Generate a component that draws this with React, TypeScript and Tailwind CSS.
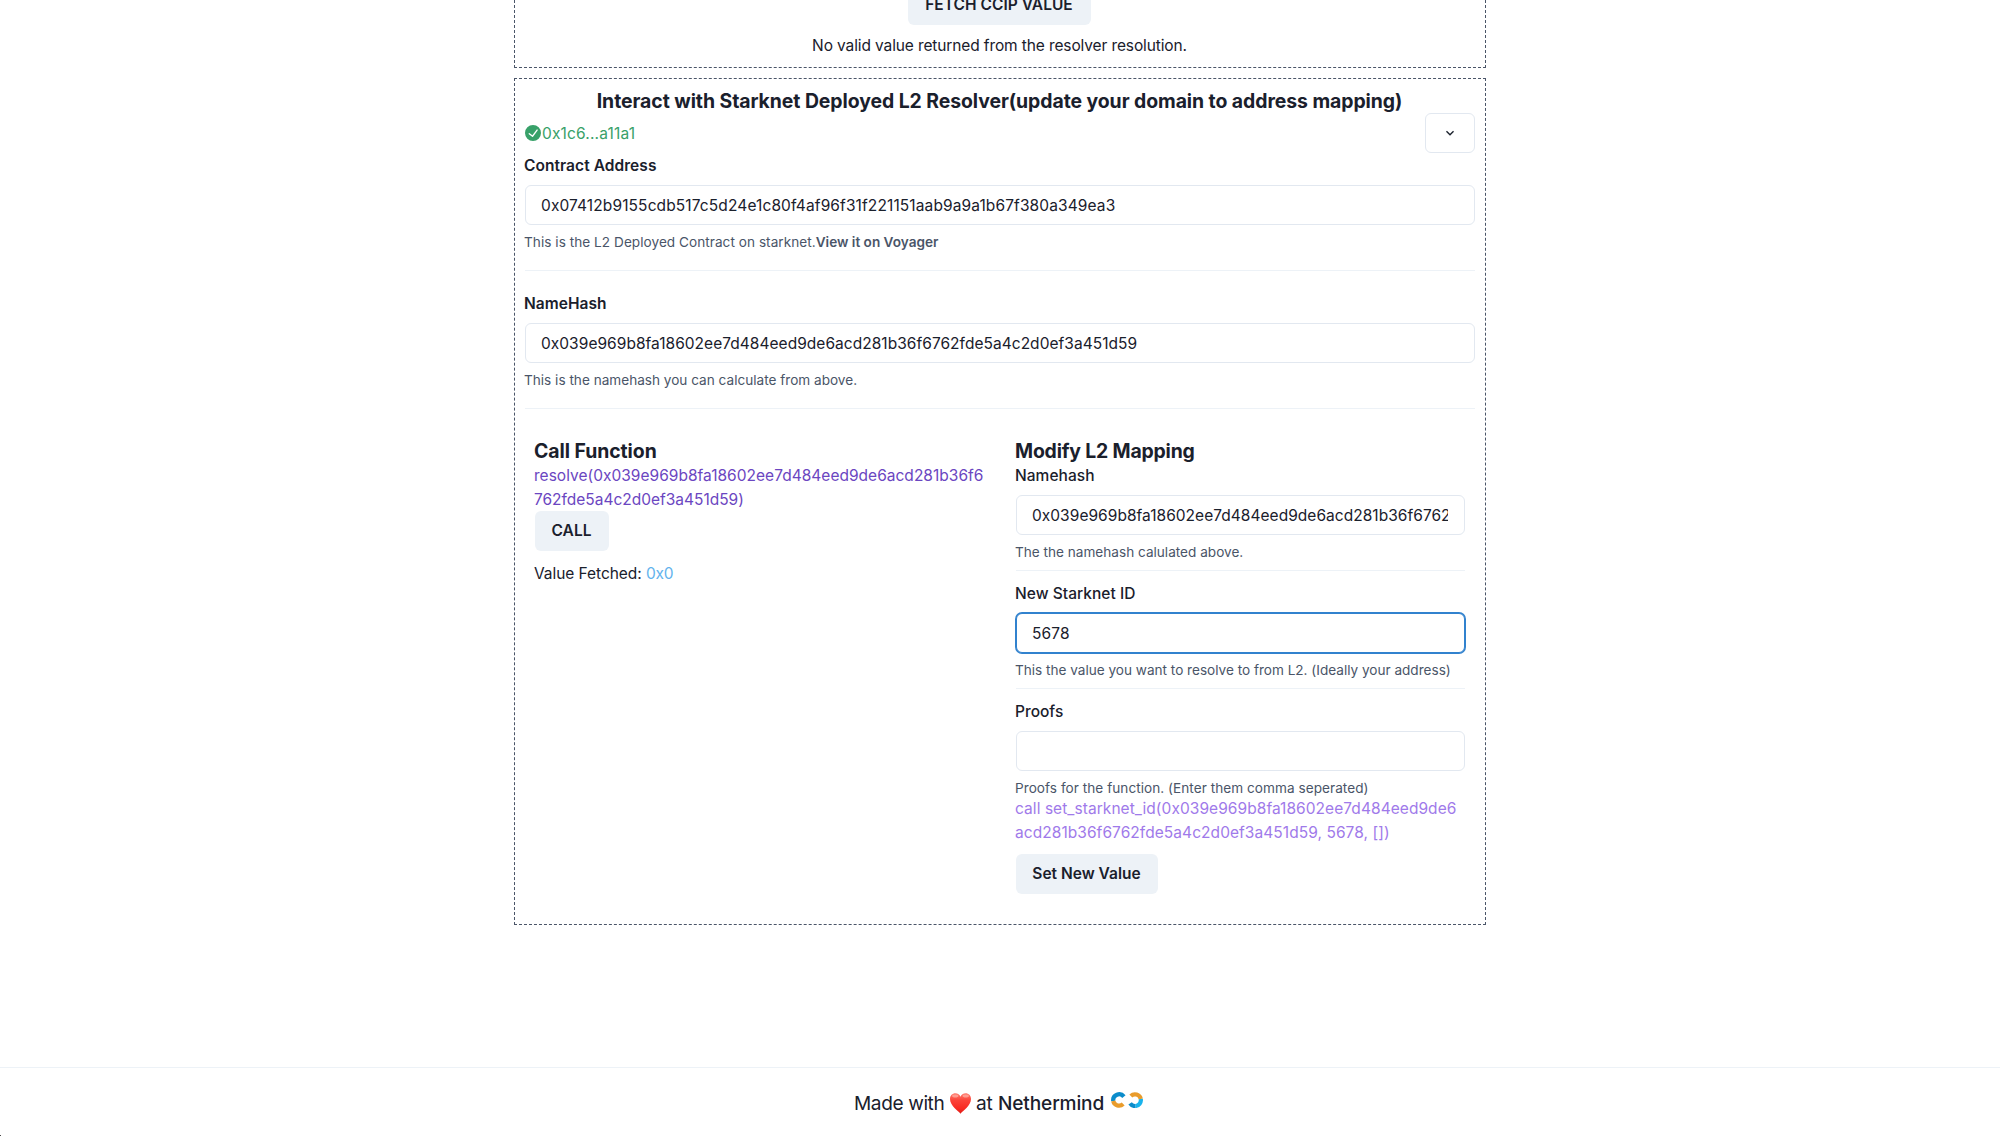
import type { ReactNode } from "react";

const HASH = "0x039e969b8fa18602ee7d484eed9de6acd281b36f6762fde5a4c2d0ef3a451d59";
const CONTRACT = "0x07412b9155cdb517c5d24e1c80f4af96f31f221151aab9a9a1b67f380a349ea3";

function Field({
  label,
  labelClass,
  value,
  inputClass = "border border-[#e2e8f0]",
  children,
}: {
  label: string;
  labelClass: string;
  value: string;
  inputClass?: string;
  children: ReactNode;
}) {
  return (
    <div>
      <label className={`mb-2 -ml-px block h-6 leading-[26px] ${labelClass}`}>{label}</label>
      <input
        readOnly
        value={value}
        className={`block h-10 w-full rounded-md bg-white pl-[15px] pr-4 outline-none ${inputClass}`}
      />
      <div className="mt-2 -ml-px h-[17px] whitespace-nowrap text-[13.6px] leading-[19px] text-[#4a5568]">
        {children}
      </div>
    </div>
  );
}

function Button({ children, className = "" }: { children: ReactNode; className?: string }) {
  return (
    <button
      className={`flex h-10 shrink-0 items-center justify-center whitespace-nowrap rounded-md bg-[#edf2f7] pr-px font-semibold ${className}`}
    >
      {children}
    </button>
  );
}

function CheckCircle() {
  return (
    <svg viewBox="0 0 24 24" className="size-4 shrink-0" fill="currentColor">
      <path d="M12,0A12,12,0,1,0,24,12,12.014,12.014,0,0,0,12,0Zm6.927,8.2-6.845,9.289a1.011,1.011,0,0,1-1.43.188L5.764,13.769a1,1,0,1,1,1.25-1.562l4.076,3.261,6.227-8.451A1,1,0,1,1,18.927,8.2Z" />
    </svg>
  );
}

function Heart() {
  return (
    <svg viewBox="0 0 20 20" className="h-[21px] w-[21px] shrink-0">
      <defs>
        <linearGradient id="heart" x1="0" y1="0" x2="0" y2="1">
          <stop offset="0" stopColor="#ff7a6c" />
          <stop offset="0.35" stopColor="#fb4339" />
          <stop offset="0.75" stopColor="#f82a22" />
          <stop offset="1" stopColor="#dc1d18" />
        </linearGradient>
      </defs>
      <path
        d="M10 19.8C8.2 16.9 0 12.4 0 5.7C0 2.5 2.3 0.3 5.1 0.3C7.4 0.3 9.2 1.6 10 3.5C10.8 1.6 12.6 0.3 14.9 0.3C17.7 0.3 20 2.5 20 5.7C20 12.4 11.8 16.9 10 19.8Z"
        fill="url(#heart)"
      />
      <ellipse cx="5" cy="2.8" rx="3" ry="1.4" fill="#ffb3a8" opacity="0.7" />
      <ellipse cx="15" cy="2.8" rx="3" ry="1.4" fill="#ffb3a8" opacity="0.7" />
    </svg>
  );
}

function NethermindLogo() {
  return (
    <svg viewBox="0 0 32 16" className="h-4 w-8 shrink-0" fill="none" strokeWidth="4.2">
      <path d="M2.2 9A6 6 0 0 1 12.9 4.6" stroke="#0b8ccb" />
      <path d="M2.2 9A6 6 0 0 0 12.2 12" stroke="#e99c2c" />
      <path d="M19.8 4A6 6 0 0 1 29.8 7" stroke="#e99c2c" />
      <path d="M29.8 7A6 6 0 0 1 24.5 14" stroke="#19b3ec" />
      <path d="M24.5 14A6 6 0 0 1 19.1 11.4" stroke="#0b8ccb" />
    </svg>
  );
}

export default function App() {
  return (
    <div className="relative flex h-[1136px] w-full flex-col overflow-hidden bg-white font-[Inter,'Liberation_Sans',sans-serif] text-[15.5px] leading-6 text-[#1a202c]">
      <main className="mx-auto flex w-[972px] flex-1 flex-col gap-[10px]">
        <section className="flex h-[68px] flex-col items-center justify-end border border-t-0 border-dashed border-[#4a5568] pb-[10px]">
          <Button className="mr-px w-[183px] tracking-[0.03px]">FETCH CCIP VALUE</Button>
          <p className="mt-2 mr-px h-6 leading-[26px] tracking-[-0.12px]">
            No valid value returned from the resolver resolution.
          </p>
        </section>

        <section className="flex h-[847px] flex-col border border-dashed border-[#4a5568] p-[10px]">
          <h2 className="h-6 pr-px text-center text-[19.4px] font-bold tracking-[-0.055px]">
            Interact with Starknet Deployed L2 Resolver(update your domain to address mapping)
          </h2>
          <div className="flex h-10 items-center justify-between">
            <div className="flex items-center text-[#38a169]">
              <CheckCircle />
              <span className="ml-px h-6 leading-[26px] tracking-[0.17px]">0x1c6...a11a1</span>
            </div>
            <button className="flex h-10 w-[50px] items-center justify-center rounded-md border border-[#e2e8f0]">
              <svg viewBox="0 0 24 24" className="size-4" fill="currentColor">
                <path d="M16.59 8.59L12 13.17 7.41 8.59 6 10l6 6 6-6z" />
              </svg>
            </button>
          </div>

          <Field
            label="Contract Address"
            labelClass="font-semibold tracking-[0.06px]"
            value={CONTRACT}
            inputClass="border border-[#e2e8f0] tracking-[0.11px]"
          >
            <span className="tracking-[0.04px]">This is the L2 Deployed Contract on starknet.</span>
            <span className="font-semibold">View it on Voyager</span>
          </Field>
          <hr className="my-5 border-[#edf2f7]" />
          <Field
            label="NameHash"
            labelClass="font-semibold tracking-[0.04px]"
            value={HASH}
            inputClass="border border-[#e2e8f0] tracking-[0.035px]"
          >
            This is the namehash you can calculate from above.
          </Field>
          <hr className="my-5 border-[#edf2f7]" />

          <div className="grid grid-cols-2 gap-3">
            <div className="flex flex-col items-start p-[10px]">
              <h3 className="-ml-px text-[19.4px] font-bold tracking-[-0.05px]">Call Function</h3>
              <p className="-mb-px -ml-px whitespace-nowrap pt-px text-[#6b46c1]">
                <span className="tracking-[0.02px]">{"resolve(" + HASH.slice(0, 43)}</span>
                <br />
                <span className="tracking-[-0.01px]">{HASH.slice(43) + ")"}</span>
              </p>
              <Button className="w-[74px]">CALL</Button>
              <p className="mt-[11px] -ml-px tracking-[-0.06px]">
                Value Fetched: <span className="text-[#63b3ed] tracking-[-0.2px]">0x0</span>
              </p>
            </div>

            <div className="flex flex-col p-[10px]">
              <h3 className="-ml-px text-[19.4px] font-bold tracking-[-0.17px]">
                Modify L2 Mapping
              </h3>
              <Field
                label="Namehash"
                labelClass="font-medium tracking-[0.04px]"
                value={HASH}
                inputClass="border border-[#e2e8f0] tracking-[0.035px]"
              >
                The the namehash calulated above.
              </Field>
              <hr className="my-[10px] border-[#edf2f7]" />
              <Field
                label="New Starknet ID"
                labelClass="font-medium tracking-[0.04px]"
                value="5678"
                inputClass="border border-[#3182ce] shadow-[0_0_0_1px_#3182ce] tracking-[0.1px]"
              >
                <span className="tracking-[-0.01px]">
                  This the value you want to resolve to from L2. (Ideally your address)
                </span>
              </Field>
              <hr className="my-[10px] border-[#edf2f7]" />
              <Field label="Proofs" labelClass="font-medium" value="">
                <span className="tracking-[0.04px]">
                  Proofs for the function. (Enter them comma seperated)
                </span>
              </Field>
              <p className="-mb-px -ml-px whitespace-nowrap pt-px tracking-[0.06px] text-[#9f7aea]">
                {"call set_starknet_id(" + HASH.slice(0, 32)}
                <br />
                {HASH.slice(32) + ", 5678, [])"}
              </p>
              <Button className="mt-[10px] w-[142px]">Set New Value</Button>
            </div>
          </div>
        </section>
      </main>

      <footer className="flex h-[69px] items-start justify-center border-t border-[#edf2f7] pt-5">
        <div className="flex h-[30px] w-[292px] items-center text-[19.1px]">
          <span className="w-24 whitespace-nowrap tracking-[-0.4px]">Made with</span>
          <Heart />
          <span className="ml-[5px] w-[22px] tracking-[-0.3px]">at</span>
          <span className="w-[113px] font-medium tracking-[-0.15px]">Nethermind</span>
          <div className="-mt-[6px]">
            <NethermindLogo />
          </div>
        </div>
      </footer>
      <span className="absolute bottom-0 left-0 size-px bg-[#4a4a4a]" />
    </div>
  );
}
